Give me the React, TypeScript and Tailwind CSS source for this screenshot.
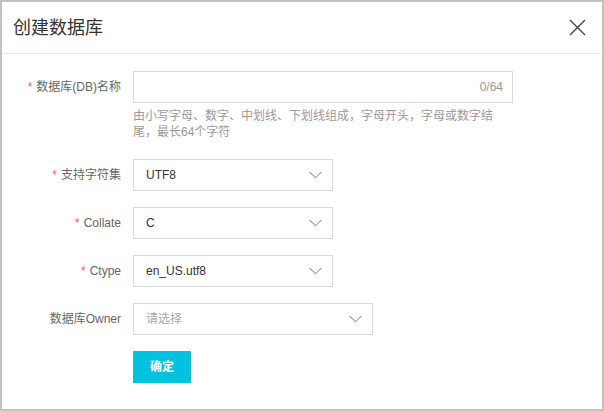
import React from "react";

const font = { fontFamily: '"Liberation Sans", "Noto Sans CJK SC", sans-serif' };

function Chevron() {
  return (
    <svg width="13" height="8" viewBox="0 0 13 8" fill="none" className="shrink-0">
      <path d="M0.5 0.8 L6.5 6.8 L12.5 0.8" stroke="#9a9a9a" strokeWidth="1.1" />
    </svg>
  );
}

function Label({ text, required }: { text: string; required?: boolean }) {
  return (
    <div className="w-[119px] shrink-0 h-[32px] flex items-center justify-end text-[12px] text-[#666]">
      {required && <span className="text-[#f55] mr-[4px]">*</span>}
      <span>{text}</span>
    </div>
  );
}

function Select({ value, placeholder, width }: { value?: string; placeholder?: string; width: string }) {
  return (
    <div className={`${width} h-[32px] border border-[#d9d9d9] flex items-center justify-between pl-[12px] pr-[10px]`}>
      {value ? (
        <span className="text-[12px] text-[#333]">{value}</span>
      ) : (
        <span className="text-[12px] text-[#a8a8a8]">{placeholder}</span>
      )}
      <Chevron />
    </div>
  );
}

export default function App() {
  return (
    <div style={font} className="w-[604px] h-[411px] border-2 border-[#c2c2c2] bg-white flex flex-col">
      <div className="h-[52px] shrink-0 border-b border-[#e6e6e6] flex items-center justify-between pl-[11px] pr-[16px]">
        <h2 className="text-[18px] leading-[24px] text-[#333]">创建数据库</h2>
        <svg width="17" height="17" viewBox="0 0 17 17" fill="none">
          <path d="M1 1 L16 16 M16 1 L1 16" stroke="#444" strokeWidth="1.4" />
        </svg>
      </div>

      <div className="pt-[17px] flex flex-col">
        <div className="flex mb-[19px]">
          <Label text="数据库(DB)名称" required />
          <div className="ml-[12px] w-[380px]">
            <div className="h-[32px] border border-[#d9d9d9] flex items-center justify-end pr-[9px]">
              <span className="text-[12px] text-[#999]">0/64</span>
            </div>
            <p className="mt-[5px] text-[12px] leading-[16px] text-[#999]">
              由小写字母、数字、中划线、下划线组成，字母开头，字母或数字结尾，最长64个字符
            </p>
          </div>
        </div>

        <div className="flex mb-[16px]">
          <Label text="支持字符集" required />
          <div className="ml-[12px]">
            <Select value="UTF8" width="w-[200px]" />
          </div>
        </div>

        <div className="flex mb-[16px]">
          <Label text="Collate" required />
          <div className="ml-[12px]">
            <Select value="C" width="w-[200px]" />
          </div>
        </div>

        <div className="flex mb-[16px]">
          <Label text="Ctype" required />
          <div className="ml-[12px]">
            <Select value="en_US.utf8" width="w-[200px]" />
          </div>
        </div>

        <div className="flex mb-[16px]">
          <Label text="数据库Owner" />
          <div className="ml-[12px]">
            <Select placeholder="请选择" width="w-[240px]" />
          </div>
        </div>

        <div className="flex">
          <div className="w-[119px] shrink-0" />
          <button className="ml-[12px] w-[58px] h-[32px] bg-[#00c1de] text-white text-[12px] font-bold">
            确定
          </button>
        </div>
      </div>
    </div>
  );
}
